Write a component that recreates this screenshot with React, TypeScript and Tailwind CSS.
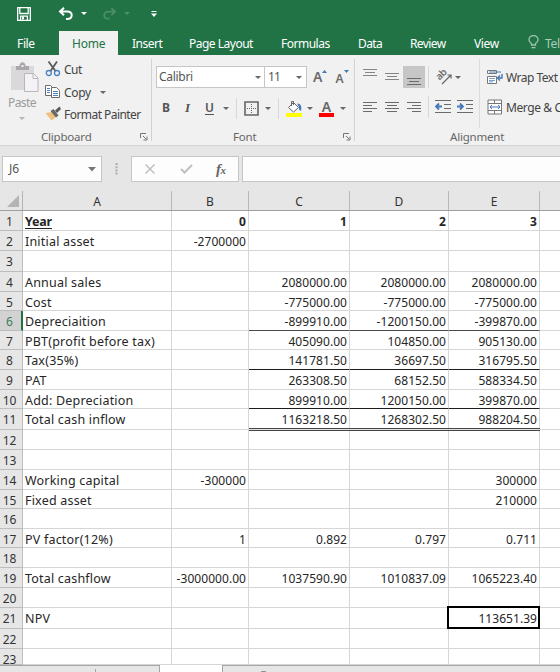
import type { ReactNode } from 'react';

type Row = {
  h: string;
  cells: string[];
  bold?: boolean;
  line?: 'single' | 'soft' | 'double';
  boxed?: boolean;
};

const COLS = ['w-[149px]', 'w-[77px]', 'w-[101px]', 'w-[99px]', 'w-[91px]', 'w-[20px]'];
const LETTERS = ['A', 'B', 'C', 'D', 'E', ''];
const SELECTED_ROW = 6;

const ROWS: Row[] = [
  { h: 'h-[20px]', cells: ['Year', '0', '1', '2', '3'], bold: true },
  { h: 'h-[20px]', cells: ['Initial asset', '-2700000'] },
  { h: 'h-[21px]', cells: [] },
  { h: 'h-[20px]', cells: ['Annual sales', '', '2080000.00', '2080000.00', '2080000.00'] },
  { h: 'h-[19px]', cells: ['Cost', '', '-775000.00', '-775000.00', '-775000.00'] },
  { h: 'h-[20px]', cells: ['Depreciaition', '', '-899910.00', '-1200150.00', '-399870.00'], line: 'soft' },
  { h: 'h-[19px]', cells: ['PBT(profit before tax)', '', '405090.00', '104850.00', '905130.00'] },
  { h: 'h-[20px]', cells: ['Tax(35%)', '', '141781.50', '36697.50', '316795.50'], line: 'single' },
  { h: 'h-[20px]', cells: ['PAT', '', '263308.50', '68152.50', '588334.50'] },
  { h: 'h-[19px]', cells: ['Add: Depreciation', '', '899910.00', '1200150.00', '399870.00'], line: 'single' },
  { h: 'h-[21px]', cells: ['Total cash inflow', '', '1163218.50', '1268302.50', '988204.50'], line: 'double' },
  { h: 'h-[20px]', cells: [] },
  { h: 'h-[20px]', cells: [] },
  { h: 'h-[20px]', cells: ['Working capital', '-300000', '', '', '300000'] },
  { h: 'h-[19px]', cells: ['Fixed asset', '', '', '', '210000'] },
  { h: 'h-[20px]', cells: [] },
  { h: 'h-[19px]', cells: ['PV factor(12%)', '1', '0.892', '0.797', '0.711'] },
  { h: 'h-[20px]', cells: [] },
  { h: 'h-[20px]', cells: ['Total cashflow', '-3000000.00', '1037590.90', '1010837.09', '1065223.40'] },
  { h: 'h-[20px]', cells: [] },
  { h: 'h-[21px]', cells: ['NPV', '', '', '', '113651.39'], boxed: true },
  { h: 'h-[20px]', cells: [] },
  { h: 'h-[16px]', cells: [] },
];

const LINES = {
  single: 'border-b-[#1c1c1c]',
  soft: 'border-b-[#4d484b]',
  double: 'border-b-[#e4e4e4]',
};

function Caret({ className = 'text-[#666]' }: { className?: string }) {
  return (
    <svg width="6" height="3" viewBox="0 0 6 3" className={`shrink-0 ${className}`}>
      <path d="M0 0h6L3 3z" fill="currentColor" />
    </svg>
  );
}

function Launcher() {
  return (
    <svg width="8" height="8" viewBox="0 0 8 8" className="shrink-0" fill="none" stroke="#777">
      <path d="M.5 5V.5H6M3 3l3 3M7 3.5V7H3.5" />
    </svg>
  );
}

function Lines({ rows, color = '#6b6b6b' }: { rows: [number, number, number][]; color?: string }) {
  return (
    <svg width="22" height="22" viewBox="0 0 22 22" className="shrink-0" stroke={color}>
      {rows.map(([x, y, w]) => (
        <path key={y} d={`M${x} ${y}h${w}`} />
      ))}
    </svg>
  );
}

function TitleBar() {
  return (
    <div className="flex h-[31px] items-start bg-[#217346] pt-[7px] pl-[17px] text-white">
      <svg width="14" height="14" viewBox="0 0 14 14" fill="none" stroke="#fff" strokeWidth="1.3">
        <path d="M.7.7h12.600v12.600H.7zM2.800 1v5.500h8.400V1M3.600 13V9.2h6.8V13" />
        <path d="M5 9.5h2v3H5z" fill="#fff" stroke="none" />
      </svg>
      <svg width="16" height="14" viewBox="0 0 16 14" className="ml-[27px]" fill="none" stroke="#fff" strokeWidth="2">
        <path d="M6 .8 2 4.5 6 8.2M2.2 4.5h7c6 0 6 7.500 0 7.500H8" />
      </svg>
      <Caret className="mt-[5px] ml-[7px] text-white" />
      <svg width="15" height="14" viewBox="0 0 16 14" className="ml-[15px]" fill="none" stroke="#4c8f6b" strokeWidth="1.800">
        <path d="m10 .8 4 3.700-4 3.700M13.800 4.500h-7c-6 0-6 7.500 0 7.500H8" />
      </svg>
      <Caret className="mt-[5px] ml-[7px] text-[#4c8f6b]" />
      <svg width="6" height="6" viewBox="0 0 6 6" className="mt-[4px] ml-[21px]">
        <path d="M.5 0h5v1h-5zM0 2.500h6L3 6z" fill="#fff" />
      </svg>
    </div>
  );
}

function Tab({ children, className }: { children: ReactNode; className: string }) {
  return <div className={`shrink-0 whitespace-nowrap ${className}`}>{children}</div>;
}

function Tabs() {
  return (
    <div className="flex h-6 bg-[#217346] text-[12px] leading-[25px] tracking-[-0.35px] text-white">
      <Tab className="w-[59px] pl-[17px] leading-[26px]">File</Tab>
      <Tab className="w-[59px] bg-[#f1f1f1] pl-[13px] tracking-[-0.2px] text-[#217346]">Home</Tab>
      <Tab className="w-[71px] pl-[14px] tracking-[-0.5px]">Insert</Tab>
      <Tab className="w-[92px] tracking-[-0.5px]">Page Layout</Tab>
      <Tab className="w-[77px] tracking-[-0.5px]">Formulas</Tab>
      <Tab className="w-[52px] tracking-[-0.6px]">Data</Tab>
      <Tab className="w-[64px] tracking-[-0.6px]">Review</Tab>
      <Tab className="w-[54px]">View</Tab>
      <svg width="11" height="14" viewBox="0 0 11 14" className="mt-[4px] shrink-0" fill="none" stroke="#9cc4ad" strokeWidth="1.300">
        <path d="M3.500 10V8.500C2 7.500 1 6.500 1 4.800a4.500 4.300 0 0 1 9 0c0 1.700-1 2.700-2.500 3.700V10zM3.500 12.700h4" />
      </svg>
      <Tab className="w-[21px] pl-[6px] text-[#a9ccb8]">Tel</Tab>
    </div>
  );
}

function ClipboardGroup() {
  return (
    <div className="relative mt-1 flex h-[82px] w-[152px] shrink-0 flex-col border-r border-[#d2d2d2]">
      <div className="flex h-[69px] shrink-0">
        <div className="flex w-[44px] flex-col items-center pt-[3px] text-[#9b9b9b]">
          <svg width="30" height="31" viewBox="0 0 30 31" className="ml-[4px]">
            <path d="M2 4h23v24H2z" fill="#dbd8dc" />
            <path d="M7 4h3.500c0-5 6-5 6 0H20v4H7z" fill="#aaa8aa" />
            <path d="M12.500 3h2v2h-2z" fill="#eee" />
            <path d="M15.500 11.500h9l4.500 4.500v13.500H15.500z" fill="#f5f2f7" stroke="#b9b5b9" />
            <path d="M24 11.500V16.500h5" fill="none" stroke="#b9b5b9" />
          </svg>
          <span className="mt-[3px] text-[12px] leading-[14px] tracking-[-0.6px]">Paste</span>
          <Caret className="mt-[7px] text-[#b5b5b5]" />
        </div>
        <div className="flex flex-col pl-[1px] text-[12px] tracking-[-0.55px] text-[#444]">
          <div className="flex h-[22px] items-center">
            <svg width="16" height="16" viewBox="0 0 16 16" className="mr-[3px] -mt-[2px]" fill="none">
              <path d="M3.500.5 10.500 10M12 .5 5.500 10" stroke="#5b5b5b" strokeWidth="1.800" />
              <circle cx="3.800" cy="12" r="2.500" stroke="#4a82be" strokeWidth="1.300" />
              <circle cx="12" cy="12" r="2.500" stroke="#4a82be" strokeWidth="1.300" />
            </svg>
            Cut
          </div>
          <div className="flex h-[23px] items-center tracking-[-0.3px]">
            <svg width="16" height="16" viewBox="0 0 16 16" className="mr-[3px] -mt-px" fill="#fff" stroke="#6b6b6b">
              <path d="M.5 1.500h5l2 2v8h-7z" />
              <path d="M2 4.500h3M2 6.500h3M2 8.500h3" stroke="#4a82be" />
              <path d="M6.500 3.500h5l3 3v7h-8z" />
              <path d="M8 7.500h5M8 9.500h5M8 11.500h5" stroke="#4a82be" />
            </svg>
            Copy
            <Caret className="ml-[9px] text-[#666]" />
          </div>
          <div className="flex h-[22px] items-center whitespace-nowrap">
            <svg width="16" height="16" viewBox="0 0 16 16" className="mr-[3px] -mt-[2px]">
              <path d="M.5 7 7 6l4 5-4.500 3.500z" fill="#ecc17f" />
              <path d="m5.500 5 3-2 5 6.500-2.500 2z" fill="#666" />
              <path d="m10 4.500 4.500-4L16 3l-4 4z" fill="#5a5a5a" />
            </svg>
            Format Painter
          </div>
        </div>
      </div>
      <GroupLabel className="pl-[41px]">Clipboard</GroupLabel>
      <div className="absolute right-[3px] bottom-[0px]">
        <Launcher />
      </div>
    </div>
  );
}

function GroupLabel({ children, className }: { children: ReactNode; className: string }) {
  return (
    <div className={`shrink-0 text-[11.5px] leading-[18px] tracking-[-0.2px] whitespace-nowrap text-[#666] ${className}`}>
      {children}
    </div>
  );
}

function FontGroup() {
  return (
    <div className="relative mt-1 flex h-[82px] w-[203px] shrink-0 flex-col border-r border-[#d2d2d2]">
      <div className="flex h-[29px] shrink-0 pt-[7px] pl-[4px] text-[12px] text-[#555]">
        <div className="flex h-[22px] w-[109px] shrink-0 items-center justify-between border border-[#c6c6c6] bg-white pr-[3px] pl-[2px] tracking-[-0.3px]">
          Calibri <Caret />
        </div>
        <div className="flex h-[22px] w-[42px] shrink-0 items-center justify-between border border-l-0 border-[#c6c6c6] bg-white pr-[4px] pl-[3px] tracking-[-0.8px]">
          11 <Caret />
        </div>
        <div className="flex pl-[6px] font-semibold text-[#6a6a6a]">
          <span className="text-[14px] leading-[22px]">A</span>
          <svg width="5" height="3" viewBox="0 0 5 3" className="mt-[4px]">
            <path d="M0 3h5L2.500 0z" fill="#4379b6" />
          </svg>
          <span className="ml-[8px] text-[12px] leading-[25px]">A</span>
          <svg width="5" height="3" viewBox="0 0 5 3" className="mt-[4px]">
            <path d="M0 0h5L2.500 3z" fill="#4379b6" />
          </svg>
        </div>
      </div>
      <div className="flex h-[40px] shrink-0 items-center pl-[10px] text-[12px] text-[#555]">
        <span className="w-[22px] font-bold">B</span>
        <span className="w-[21px] pl-px font-['Liberation_Serif',serif] text-[13px] font-bold italic">I</span>
        <span className="w-[18px] font-semibold underline underline-offset-2">U</span>
        <Caret />
        <div className="ml-[7px] h-[21px] w-px bg-[#d8d8d8]" />
        <svg width="15" height="15" viewBox="0 0 15 15" className="ml-[7px] shrink-0" fill="none" stroke="#666">
          <path d="M1 1h13v13H1z" strokeWidth="1.600" />
          <path d="M7.500 3v10M3 7.500h10" strokeDasharray="1 1" />
        </svg>
        <Caret className="ml-[6px] text-[#666]" />
        <div className="ml-[7px] h-[21px] w-px bg-[#d8d8d8]" />
        <svg width="16" height="17" viewBox="0 0 16 17" className="ml-[7px] shrink-0">
          <path d="M0 13h16v4H0z" fill="#ff0" />
          <path d="m2.500 7.500 5-5 5 5-5 4.500z" fill="#fff" stroke="#666" />
          <path d="M5.500 6V1.500h2V5" fill="none" stroke="#666" />
          <path d="M11 3.500c4 0 5 3 4 7.500l-2-1.500V7z" fill="#4379b6" />
        </svg>
        <Caret className="ml-[5px] text-[#666]" />
        <div className="ml-[6px] flex h-[17px] w-[15px] shrink-0 flex-col items-center border-b-4 border-[#f00]">
          <span className="text-[14px] leading-[13px] font-semibold text-[#666]">A</span>
        </div>
        <Caret className="ml-[6px] text-[#666]" />
      </div>
      <GroupLabel className="pl-[81px]">Font</GroupLabel>
      <div className="absolute right-[3px] bottom-[0px]">
        <Launcher />
      </div>
    </div>
  );
}

function AlignmentGroup() {
  return (
    <div className="mt-1 flex h-[86px] w-[205px] shrink-0 flex-col">
      <div className="flex h-[69px] shrink-0">
        <div className="w-[73px] pt-[7px] pl-[4px]">
          <div className="flex h-[30px]">
            <Lines color="#858585" rows={[[4, 3.5, 14], [6, 6.5, 10], [4, 9.5, 14]]} />
            <Lines color="#858585" rows={[[4, 7.5, 14], [6, 10.5, 10], [4, 13.5, 14]]} />
            <div className="h-[22px] w-[22px] bg-[#c6c6c6]">
              <Lines rows={[[4, 12.5, 14], [6, 15.5, 10], [4, 18.5, 14]]} />
            </div>
          </div>
          <div className="flex">
            <Lines rows={[[4, 6.5, 14], [4, 9.5, 9], [4, 12.5, 14], [4, 15.5, 9]]} />
            <Lines rows={[[4, 6.5, 14], [6, 9.5, 10], [4, 12.5, 14], [6, 15.5, 10]]} />
            <Lines rows={[[4, 6.5, 14], [9, 9.5, 9], [4, 12.5, 14], [9, 15.5, 9]]} />
          </div>
        </div>
        <div className="flex w-[52px] flex-col border-r border-[#dcdcdc]">
          <div className="mt-[7px] flex h-[22px] items-center border-l border-[#d8d8d8] pl-[6px]">
            <div className="relative h-[18px] w-[18px]">
              <span className="absolute top-[-1px] left-[0px] -rotate-45 text-[10px] leading-[14px] font-semibold tracking-[-0.5px] text-[#6f6f6f]">ab</span>
              <svg width="18" height="18" viewBox="0 0 18 18" className="absolute inset-0" fill="none" stroke="#666" strokeWidth="1.200">
                <path d="m7 16 9-9M12.500 7H16v3.500" />
              </svg>
            </div>
            <Caret className="ml-[2px] text-[#666]" />
          </div>
          <div className="mt-[8px] flex h-[22px] items-center gap-[6px] border-l border-[#d8d8d8] pl-[6px]">
            <svg width="16" height="14" viewBox="0 0 16 14" className="shrink-0" fill="none" stroke="#6b6b6b">
              <path d="M0 .5h16M9 4.500h7M9 8.500h7M0 12.500h16" />
              <path d="M1 6.500h6M4 3.500 1 6.500l3 3" stroke="#4379b6" strokeWidth="1.800" />
            </svg>
            <svg width="16" height="14" viewBox="0 0 16 14" className="shrink-0" fill="none" stroke="#6b6b6b">
              <path d="M0 .5h16M9 4.500h7M9 8.500h7M0 12.500h16" />
              <path d="M0 6.500h6M3 3.500l3 3-3 3" stroke="#4379b6" strokeWidth="1.800" />
            </svg>
          </div>
        </div>
        <div className="w-[80px] pt-[6px] pl-[7px] text-[12px] tracking-[-0.5px] whitespace-nowrap text-[#444]">
          <div className="flex h-[24px] items-center pt-px">
            <svg width="16" height="16" viewBox="0 0 16 16" className="mr-[3px] -mt-[2px] shrink-0" fill="none" stroke="#777">
              <path d="M.5 1.500h9v3h-9z" fill="#fff" />
              <path d="M2 3h12" stroke="#4379b6" />
              <path d="M.5 7.500h9v7h-9z" fill="#fff" />
              <path d="M2 9.500h6M2 11.500h6M2 12.800h4" stroke="#75a3d3" />
              <path d="M15 5v4h-4M13 6.500 10.500 9l2.500 2.500" stroke="#4379b6" strokeWidth="1.400" />
            </svg>
            Wrap Text
          </div>
          <div className="mt-[6px] flex h-[24px] items-center pt-[2px] tracking-[-0.4px]">
            <svg width="16" height="16" viewBox="0 0 16 16" className="mr-[3px] -mt-[3px] shrink-0" fill="#fff" stroke="#777">
              <path d="M1 1h13.500v14H1zM1 4.500h13.500M1 11.500h13.500M7.500 1v3.500M7.500 11.500V15" />
              <path d="M3 8h10M5 6 3 8l2 2M11 6l2 2-2 2" stroke="#4379b6" fill="none" />
            </svg>
            Merge &amp; C
          </div>
        </div>
      </div>
      <GroupLabel className="pl-[95px]">Alignment</GroupLabel>
    </div>
  );
}

function FormulaBar() {
  return (
    <div className="flex h-[46px] items-start border-t border-[#d4d4d4] bg-[#e6e6e6] pt-[10px] pl-[2px]">
      <div className="flex h-[26px] w-[100px] items-center justify-between border border-[#c6c6c6] bg-[#fdfdfd] pr-[5px] pl-[6px] text-[12px] text-[#555]">
        J6
        <svg width="8" height="5" viewBox="0 0 8 5">
          <path d="M0 0h8L4 4.500z" fill="#777" />
        </svg>
      </div>
      <svg width="3" height="12" viewBox="0 0 3 12" className="mt-[7px] ml-[13px]" fill="#ababab">
        <path d="M.5 0h2v2h-2zM.5 3.200h2v2h-2zM.5 6.400h2v2h-2zM.5 9.600h2v2h-2z" />
      </svg>
      <div className="ml-[13px] flex h-[26px] w-[108px] items-center border border-[#c6c6c6] bg-[#fdfdfd] pl-[13px]">
        <svg width="10" height="10" viewBox="0 0 10 10" stroke="#c0bfc2" strokeWidth="1.500">
          <path d="m.5.5 9 9M9.500.5l-9 9" />
        </svg>
        <svg width="13" height="10" viewBox="0 0 13 10" className="ml-[25px]" fill="none" stroke="#c0bfc2" strokeWidth="2">
          <path d="m1 5 3.500 3.500L12 1" />
        </svg>
        <span className="ml-[23px] font-['Liberation_Serif',serif] text-[15px] leading-none font-bold tracking-[-0.5px] text-[#666] italic">
          f<span className="text-[11px]">x</span>
        </span>
      </div>
      <div className="ml-[3px] h-[26px] flex-1 border border-r-0 border-[#c6c6c6] bg-[#fdfdfd]" />
    </div>
  );
}

function Sheet() {
  return (
    <div className="text-[12px] text-[#262626]">
      <div className="flex h-[20px] border-b border-[#9f9f9f] bg-[#e6e6e6]">
        <div className="flex w-[23px] items-end justify-end border-r border-[#b4b4b4] pr-[3px] pb-[3px]">
          <svg width="12" height="12" viewBox="0 0 12 12">
            <path d="M12 0v12H0z" fill="#b4b4b4" />
          </svg>
        </div>
        {COLS.map((w, i) => (
          <div key={i} className={`border-[#b9b9b9] text-center leading-[21px] text-[#333] ${i < 5 ? 'border-r' : ''} ${w}`}>
            {LETTERS[i]}
          </div>
        ))}
      </div>
      {ROWS.map((row, r) => {
        const selected = r + 1 === SELECTED_ROW;
        return (
          <div key={r} className={`flex leading-[21px] ${row.h}`}>
            <div
              className={`w-[23px] border-b border-b-[#bdbdbd] text-center ${
                selected
                  ? 'border-r-2 border-r-[#217346] bg-[#d2d2d2] pr-[2px] text-[#3d7a58]'
                  : 'border-r border-r-[#bdbdbd] bg-[#e6e6e6] pr-[3px] text-[#333]'
              }`}
            >
              {r + 1}
            </div>
            {COLS.map((w, c) => {
              const ruled = row.line && c >= 2 && c <= 4;
              const boxed = row.boxed && c === 4;
              return (
                <div
                  key={c}
                  className={`relative border-b border-r-[#d6d6d6] whitespace-nowrap ${c < 5 ? 'border-r' : ''} ${w} ${
                    c === 0 ? 'pl-[2px] text-left text-[12.5px] tracking-[0.2px]' : 'pr-[2px] text-right tracking-[0.05px]'
                  } ${row.bold ? 'font-bold' : ''} ${ruled && row.line ? LINES[row.line] : 'border-b-[#d6d6d6]'}`}
                >
                  {row.bold && c === 0 ? (
                    <span className="tracking-[-0.2px] underline underline-offset-2">{row.cells[c]}</span>
                  ) : (
                    row.cells[c]
                  )}
                  {ruled && row.line === 'double' && (
                    <div className="absolute -right-px -bottom-[2px] left-0 z-10 h-[3px] border-y border-[#454545]" />
                  )}
                  {boxed && <div className="absolute -top-[2px] -right-px -bottom-px -left-[2px] border-2 border-black" />}
                </div>
              );
            })}
          </div>
        );
      })}
    </div>
  );
}

function SheetTabs() {
  return (
    <div className="relative z-10 flex h-2 bg-white">
      <div className="w-[160px] border-t border-r border-[#a5a5a5] bg-[#e6e6e6]">
        <div className="mt-[3px] ml-[95px] h-1 w-px bg-[#a5a5a5]" />
      </div>
      <div className="w-[62px]" />
      <div className="flex-1 overflow-hidden border-t border-l border-[#a5a5a5] bg-[#e6e6e6] pt-[5px] pl-[34px]">
        <svg width="13" height="13" viewBox="0 0 13 13" fill="none" stroke="#777">
          <circle cx="6.5" cy="6.500" r="6" />
        </svg>
      </div>
    </div>
  );
}

export default function App() {
  return (
    <div className="h-[672px] w-[560px] overflow-hidden bg-white font-['Noto_Sans',sans-serif]">
      <TitleBar />
      <Tabs />
      <div className="flex h-[90px] overflow-hidden bg-[#f1f1f1]">
        <ClipboardGroup />
        <FontGroup />
        <AlignmentGroup />
      </div>
      <FormulaBar />
      <Sheet />
      <SheetTabs />
    </div>
  );
}
